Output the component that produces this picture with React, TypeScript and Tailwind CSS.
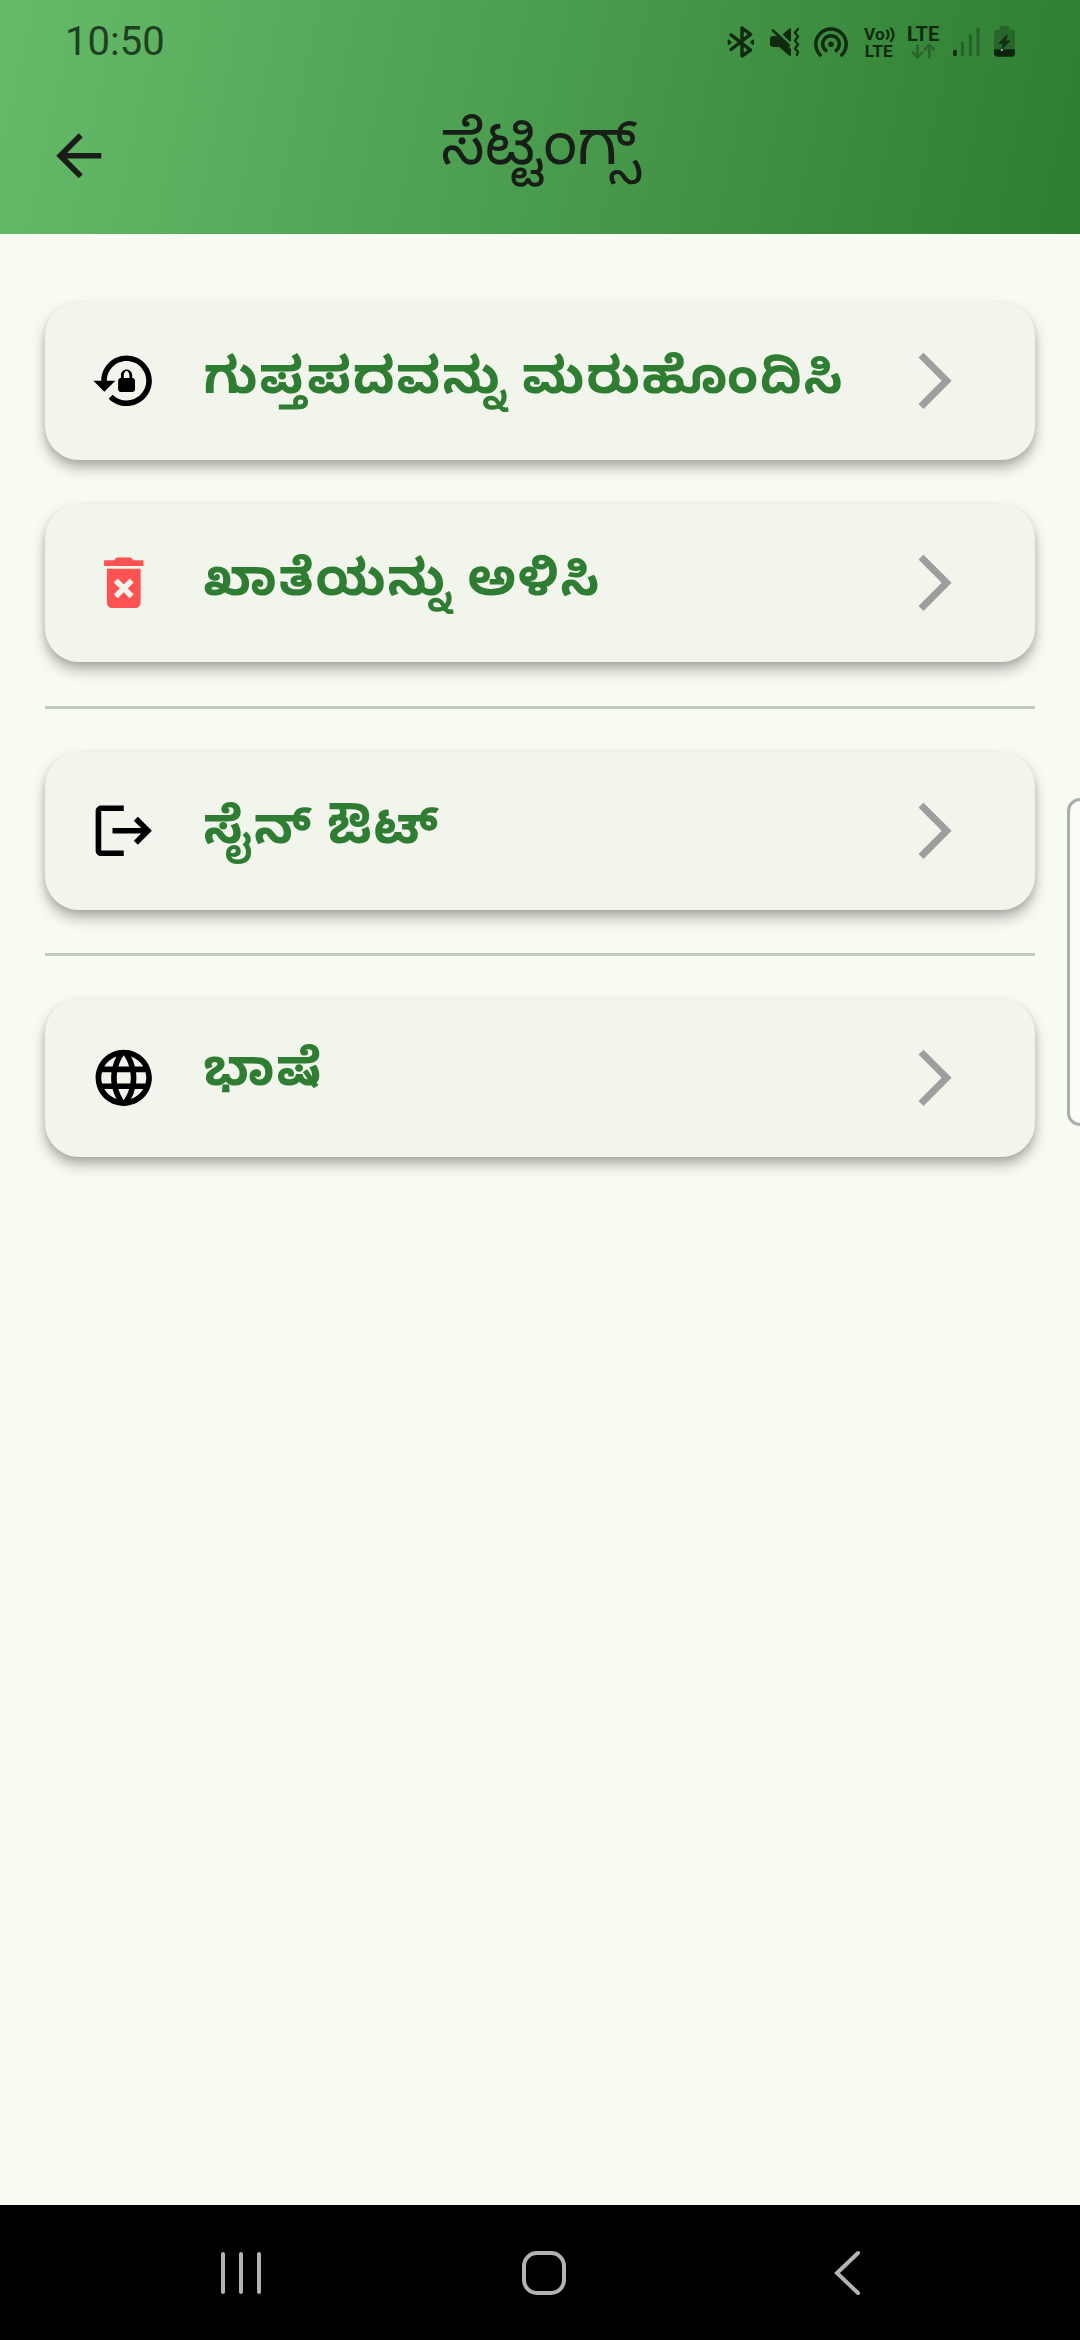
import React from "react";

const KANNADA = "font-['Noto_Sans_Kannada','Noto_Sans',sans-serif]";
const INK = "#10290f";

function BluetoothIcon() {
  return (
    <svg className="h-[40px] w-[34px]" viewBox="724 22 34 40" fill="none" stroke={INK} strokeWidth="3.4" strokeLinecap="round" strokeLinejoin="round">
      <path d="M731 34.8L750.5 50L742 56V28L750.5 34.3L731 49.5" />
      <path d="M728.7 40.6v3.4l1.8-1.7zM753 40.6v3.4l-1.8-1.7z" strokeWidth="2" fill={INK} />
    </svg>
  );
}

function MuteIcon() {
  return (
    <svg className="h-[40px] w-[34px]" viewBox="767 22 34 40" fill={INK} stroke={INK} strokeLinecap="round" strokeLinejoin="round">
      <path d="M773 37h4L790 49.5V55L779.5 46H773Q771 46 771 44V39Q771 37 773 37z" strokeWidth="2" />
      <path d="M784 34.6L790 29.2V40.5z" strokeWidth="2" />
      <path d="M773 30.5L789 45.5" strokeWidth="2.6" />
      <path d="M798 29l-3 3.6 3 4-3 4 3 4-3 4 3 3.2-1 3" fill="none" strokeWidth="2.4" />
    </svg>
  );
}

function HotspotIcon() {
  return (
    <svg className="h-[40px] w-[38px]" viewBox="812 22 38 40" fill="none" stroke={INK} strokeWidth="3.4" strokeLinecap="round">
      <path d="M820.3 55A15.2 15.2 0 1 1 841.7 55" />
      <path d="M826 50.6A8.3 8.3 0 1 1 836 50.6" />
      <circle cx="831" cy="44.3" r="2.8" fill={INK} stroke="none" />
    </svg>
  );
}

function VoLteIcon() {
  return (
    <svg className="h-[40px] w-[34px] overflow-visible" viewBox="863 22 34 40" fill={INK}>
      <text x="864" y="40" fontFamily="Roboto" fontWeight="700" fontSize="17.3">Vo</text>
      <text x="864.8" y="57" fontFamily="Roboto" fontWeight="700" fontSize="17.3">LTE</text>
      <path d="M887 30.5q3 4 0 8M891 28.5q5 6.5 0 12.5" fill="none" stroke={INK} strokeWidth="2.3" strokeLinecap="round" />
    </svg>
  );
}

function LteIcon() {
  return (
    <svg className="h-[40px] w-[36px] overflow-visible" viewBox="906 22 36 40" fill={INK}>
      <text x="907" y="40.6" fontFamily="Roboto" fontWeight="700" fontSize="20">LTE</text>
      <path d="M917.5 45.5V57M913 52.7L917.5 57.3L922 52.7M929.3 57V45.5M924.8 49.5L929.3 44.9L933.8 49.5" fill="none" stroke={INK} strokeOpacity="0.35" strokeWidth="2.6" strokeLinecap="round" strokeLinejoin="round" />
    </svg>
  );
}

function SignalIcon() {
  return (
    <svg className="h-[40px] w-[30px]" viewBox="952 22 30 40" fill="none" stroke={INK} strokeLinecap="round">
      <path d="M955 51.3V54.3" strokeWidth="3.8" />
      <path d="M962.5 43V54.5M970.5 35.5V54.5M978 28.7V54.5" strokeWidth="3.3" strokeOpacity="0.35" />
    </svg>
  );
}

function BatteryIcon() {
  return (
    <svg className="h-[40px] w-[25px]" viewBox="992 22 25 40" fill={INK}>
      <path d="M1001.5 25.7h6q1.8 0 1.8 1.8v2.2h2.7q3 0 3 3V49.3H994V32.7q0-3 3-3h2.7v-2.2q0-1.8 1.8-1.8z" opacity="0.32" />
      <path d="M994 49.3h21V53q0 3.7-3.7 3.7H997.7Q994 56.7 994 53z" fill="#0a220b" />
      <path d="M1006.5 35.3l-7.5 8.2h4.5l-2 6 8.5-8.5h-4.7l2-5.7z" stroke={INK} strokeWidth="1" strokeLinejoin="round" opacity="0.85" />
      <circle cx="1001.8" cy="50" r="1" fill="#c9dcc9" />
    </svg>
  );
}

type GlyphProps = { d: string; className: string };

function Glyph({ d, className }: GlyphProps) {
  return (
    <svg className={`h-[67.5px] w-[67.5px] shrink-0 ${className}`} viewBox="0 0 24 24" fill="currentColor">
      <path d={d} />
    </svg>
  );
}

const icons = {
  back: "M20 11H7.83l5.59-5.59L12 4l-8 8 8 8 1.41-1.41L7.83 13H20v-2z",
  reset:
    "M13 3c-4.97 0-9 4.03-9 9H1.2l3.89 3.89L9 12H6c0-3.87 3.13-7 7-7s7 3.13 7 7-3.13 7-7 7c-1.93 0-3.68-.79-4.94-2.06l-1.42 1.42C8.27 19.99 10.51 21 13 21c4.97 0 9-4.03 9-9s-4.03-9-9-9zM15 11v-1c0-1.1-.9-2-2-2s-2 .9-2 2v1c-.55 0-1 .45-1 1v3c0 .55.45 1 1 1h4c.55 0 1-.45 1-1v-3c0-.55-.45-1-1-1zm-1 0h-2v-1c0-.55.45-1.5 1-1.5s1 .95 1 1.5v1z",
  remove:
    "M6 19c0 1.1.9 2 2 2h8c1.1 0 2-.9 2-2V7H6v12zm2.46-7.12l1.41-1.41L12 12.59l2.12-2.12 1.41 1.41L13.41 14l2.12 2.12-1.41 1.41L12 15.41l-2.12 2.12-1.41-1.41L10.59 14l-2.13-2.12zM15.5 4l-1-1h-5l-1 1H5v2h14V4z",
  signOut:
    "M17 7l-1.41 1.41L18.17 11H8v2h10.17l-2.58 2.58L17 17l5-5zM4 5h8V3H4c-1.1 0-2 .9-2 2v14c0 1.1.9 2 2 2h8v-2H4V5z",
  language:
    "M11.99 2C6.47 2 2 6.48 2 12s4.47 10 9.99 10C17.52 22 22 17.52 22 12S17.52 2 11.99 2zm6.93 6h-2.95c-.32-1.25-.78-2.45-1.38-3.56 1.84.63 3.37 1.91 4.33 3.56zM12 4.04c.83 1.2 1.48 2.53 1.91 3.96h-3.82c.43-1.43 1.08-2.76 1.91-3.96zM4.26 14C4.1 13.36 4 12.69 4 12s.1-1.36.26-2h3.38c-.08.66-.14 1.32-.14 2s.06 1.34.14 2H4.26zm.82 2h2.95c.32 1.25.78 2.45 1.38 3.56-1.84-.63-3.37-1.9-4.33-3.56zm2.95-8H5.08c.96-1.66 2.49-2.93 4.33-3.56C8.81 5.55 8.35 6.75 8.03 8zM12 19.96c-.83-1.2-1.48-2.53-1.91-3.96h3.82c-.43 1.43-1.08 2.76-1.91 3.96zM14.34 14H9.66c-.09-.66-.16-1.32-.16-2s.07-1.35.16-2h4.68c.09.65.16 1.32.16 2s-.07 1.34-.16 2zm.25 5.56c.6-1.11 1.06-2.31 1.38-3.56h2.95c-.96 1.65-2.49 2.93-4.33 3.56zM16.36 14c.08-.66.14-1.32.14-2s-.06-1.34-.14-2h3.38c.16.64.26 1.31.26 2s-.1 1.36-.26 2h-3.38z",
  forward: "M6.23 20.23L8 22l10-10L8 2 6.23 3.77 14.46 12z",
};

type CardProps = { icon: string; tint: string; label: string; lift: string };

function SettingCard({ icon, tint, label, lift }: CardProps) {
  return (
    <button className="flex h-[158px] w-full items-center rounded-[34px] bg-[#f1f5eb] pl-[45px] pr-[67px] text-left shadow-[0_8px_14px_rgba(0,0,0,0.28),0_3px_6px_rgba(0,0,0,0.09)]">
      <Glyph d={icon} className={tint} />
      <span className={`ml-[46px] flex-1 whitespace-nowrap ${lift} text-[50.6px] leading-[76px] tracking-[2.1px] [word-spacing:-2.5px] font-bold text-[#2e7d32] ${KANNADA}`}>
        {label}
      </span>
      <Glyph d={icons.forward} className="text-[#9e9e9e]" />
    </button>
  );
}

export default function App() {
  return (
    <div className="flex h-[2340px] w-[1080px] flex-col overflow-hidden bg-[#f7fbf1]">
      <header className="h-[234px] shrink-0 bg-[linear-gradient(102.2deg,#66bb6a,#2e7d32)]">
        <div className="flex h-[84px] items-center justify-between pl-[65px] pr-[63px]">
          <time className="pb-[1px] font-['Roboto',sans-serif] text-[40px] leading-[83px] font-normal text-[#1e3f20]">10:50</time>
          <div className="flex items-center">
            <BluetoothIcon />
            <div className="ml-[9px]"><MuteIcon /></div>
            <div className="ml-[11px]"><HotspotIcon /></div>
            <div className="ml-[13px]"><VoLteIcon /></div>
            <div className="ml-[9px]"><LteIcon /></div>
            <div className="ml-[10px]"><SignalIcon /></div>
            <div className="ml-[10px]"><BatteryIcon /></div>
          </div>
        </div>
        <div className="grid h-[144px] grid-cols-[68px_1fr_68px] items-center px-[45px]">
          <Glyph d={icons.back} className="text-[#191d17]" />
          <h1 className={`text-center text-[61.7px] leading-[90px] font-normal text-[#191d17] ${KANNADA}`}>ಸೆಟ್ಟಿಂಗ್ಸ್</h1>
        </div>
      </header>

      <div className="flex flex-1">
        <main className="flex w-[1080px] shrink-0 flex-col px-[45px] pt-[68px]">
          <SettingCard icon={icons.reset} tint="text-black" lift="pt-[10px]" label="ಗುಪ್ತಪದವನ್ನು ಮರುಹೊಂದಿಸಿ" />
          <div className="h-[44px]" />
          <SettingCard icon={icons.remove} tint="text-[#ff5252]" lift="pt-[10px]" label="ಖಾತೆಯನ್ನು ಅಳಿಸಿ" />
          <hr className="mt-[44px] mb-[43px] h-[3px] border-0 bg-[#c2c9bd]" />
          <SettingCard icon={icons.signOut} tint="text-black" lift="pt-[10px]" label="ಸೈನ್ ಔಟ್" />
          <hr className="my-[43px] h-[3px] border-0 bg-[#c2c9bd]" />
          <SettingCard icon={icons.language} tint="text-black" lift="pb-[1px]" label="ಭಾಷೆ" />
        </main>
        <aside className="mt-[564px] -ml-[13px] h-[328px] w-[30px] shrink-0 rounded-[13px] border-[3px] border-[#abafa9] bg-[#fafcf7]" />
      </div>

      <nav className="grid h-[135px] shrink-0 grid-cols-[303px_303px_303px] bg-black pl-[89px]">
        <div className="flex items-center justify-center">
          <svg className="h-[48px] w-[44px]" viewBox="0 0 44 48" fill="none" stroke="#b3b3b3" strokeWidth="4" strokeLinecap="round">
            <path d="M4 5V43M22 5V43M40 5V43" />
          </svg>
        </div>
        <div className="flex items-center justify-center">
          <svg className="h-[48px] w-[48px]" viewBox="0 0 48 48" fill="none" stroke="#b3b3b3" strokeWidth="4">
            <rect x="4" y="4" width="40" height="40" rx="13" />
          </svg>
        </div>
        <div className="flex items-center justify-center">
          <svg className="h-[48px] w-[30px]" viewBox="0 0 30 48" fill="none" stroke="#b3b3b3" strokeWidth="4" strokeLinecap="round">
            <path d="M26 4L5 24L26 44" />
          </svg>
        </div>
      </nav>
    </div>
  );
}
